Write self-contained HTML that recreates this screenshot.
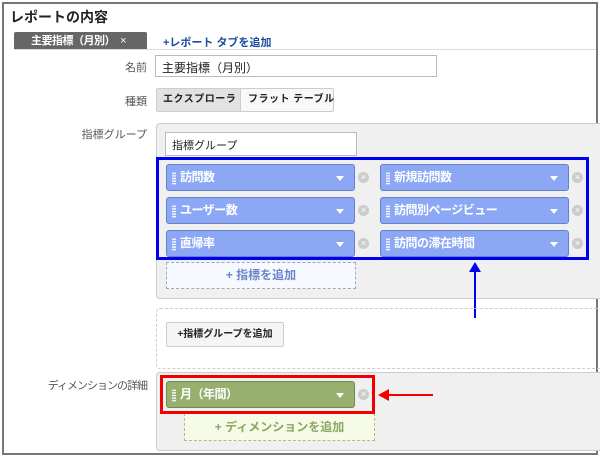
<!DOCTYPE html>
<html><head><meta charset="utf-8"><style>
*{margin:0;padding:0;box-sizing:border-box}
body{width:600px;height:458px;background:#fff;position:relative;overflow:hidden;font-family:"Liberation Sans","Noto Sans CJK JP",sans-serif;font-size:12px;color:#222}
.a{position:absolute;white-space:nowrap}
.lbl{position:absolute;right:453px;color:#555;font-size:11px;white-space:nowrap}
.chip{position:absolute;width:189px;height:27px;background:#8ca8f5;border:1px solid #6680cc;border-radius:3px;color:#fff;font-weight:bold;font-size:12px;line-height:25px;padding-left:13px;white-space:nowrap;letter-spacing:-0.5px}
.chip:before{content:"";position:absolute;left:5px;top:7px;width:4px;height:13px;background:radial-gradient(circle,#fff 0.8px,transparent 1px) 0 0/2px 2.6px}
.chip:after{content:"";position:absolute;right:10px;top:11px;border:4px solid transparent;border-top:5px solid #fff}
.x{position:absolute;width:11px;height:11px;border-radius:50%;background:#ccc;color:#fff;font-size:9px;line-height:11px;text-align:center}
.green{background:#97b06f;border-color:#6f8a4a}
</style></head><body>
<div class="a" style="left:2px;top:2px;width:596px;height:453px;border:2px solid #777"></div>
<div class="a" style="left:10px;top:7px;font-size:14px;font-weight:bold;color:#222">レポートの内容</div>
<div class="a" style="left:14px;top:32px;width:133px;height:18px;background:#666;color:#fff;font-weight:bold;font-size:11px;line-height:18px;padding-left:17px;border-radius:2px 2px 0 0;letter-spacing:-0.5px">主要指標（月別）&nbsp;&nbsp;<span style="font-weight:normal">×</span></div>
<div class="a" style="left:163px;top:34px;color:#1a4fa0;font-weight:bold;font-size:11px">+レポート タブを追加</div>
<div class="a" style="left:14px;top:49px;width:582px;height:1px;background:#ddd"></div>
<div class="lbl" style="top:59px">名前</div>
<div class="a" style="left:155px;top:55px;width:282px;height:22px;border:1px solid #bbb;padding:3px 6px;font-size:12px">主要指標（月別）</div>
<div class="lbl" style="top:93px">種類</div>
<div class="a" style="left:156px;top:88px;width:178px;height:24px;border:1px solid #ccc;border-radius:2px;background:#f8f8f8;font-weight:bold;font-size:10px;line-height:22px">
<span class="a" style="left:0;top:0;width:84px;height:22px;background:#e2e2e2;border-right:1px solid #ccc;padding-left:6px;letter-spacing:0.5px">エクスプローラ</span>
<span class="a" style="left:91px;top:0;letter-spacing:0.5px">フラット テーブル</span></div>
<div class="lbl" style="top:126px">指標グループ</div>
<div class="a" style="left:156px;top:123px;width:460px;height:176px;background:#f0f0f0;border:1px solid #ccc;border-radius:4px"></div>
<div class="a" style="left:165px;top:132px;width:192px;height:24px;background:#fff;border:1px solid #bbb;padding:4px 6px;font-size:11px">指標グループ</div>
<div class="a" style="left:156px;top:157px;width:433px;height:103px;border:3px solid #0000f0"></div>
<div class="chip" style="left:166px;top:164px">訪問数</div><div class="x" style="left:358px;top:172px">×</div>
<div class="chip" style="left:166px;top:197px">ユーザー数</div><div class="x" style="left:358px;top:205px">×</div>
<div class="chip" style="left:166px;top:230px">直帰率</div><div class="x" style="left:358px;top:238px">×</div>
<div class="chip" style="left:380px;top:164px">新規訪問数</div><div class="x" style="left:572px;top:172px">×</div>
<div class="chip" style="left:380px;top:197px">訪問別ページビュー</div><div class="x" style="left:572px;top:205px">×</div>
<div class="chip" style="left:380px;top:230px">訪問の滞在時間</div><div class="x" style="left:572px;top:238px">×</div>
<div class="a" style="left:166px;top:262px;width:190px;height:27px;border:1px dashed #9ab;background:#f6f9ff;color:#6a86c8;font-weight:bold;text-align:center;line-height:25px">+ 指標を追加</div>
<div class="a" style="left:474px;top:270px;width:2px;height:48px;background:#0000f0"></div>
<div class="a" style="left:469px;top:262px;border:6px solid transparent;border-bottom:10px solid #0000f0;border-top:0"></div>
<div class="a" style="left:156px;top:308px;width:460px;height:61px;border:1px dashed #ccc;border-radius:4px"></div>
<div class="a" style="left:166px;top:322px;width:118px;height:25px;border:1px solid #ccc;border-radius:2px;background:#f5f5f5;font-weight:bold;font-size:10px;line-height:23px;text-align:center">+指標グループを追加</div>
<div class="lbl" style="top:377px;letter-spacing:-1px">ディメンションの詳細</div>
<div class="a" style="left:156px;top:372px;width:460px;height:79px;background:#f0f0f0;border:1px solid #ccc;border-radius:4px"></div>
<div class="a" style="left:184px;top:413px;width:191px;height:28px;border:1px dashed #a9c47a;background:#f5fbe6;color:#8aa860;font-weight:bold;text-align:center;line-height:26px">+ ディメンションを追加</div>
<div class="a" style="left:160px;top:375px;width:215px;height:39px;border:3px solid #f00000"></div>
<div class="chip green" style="left:166px;top:381px">月（年間）</div><div class="x" style="left:358px;top:389px">×</div>
<div class="a" style="left:388px;top:394px;width:45px;height:2px;background:#f00000"></div>
<div class="a" style="left:378px;top:389px;border:6px solid transparent;border-right:11px solid #f00000;border-left:0"></div>
</body></html>
